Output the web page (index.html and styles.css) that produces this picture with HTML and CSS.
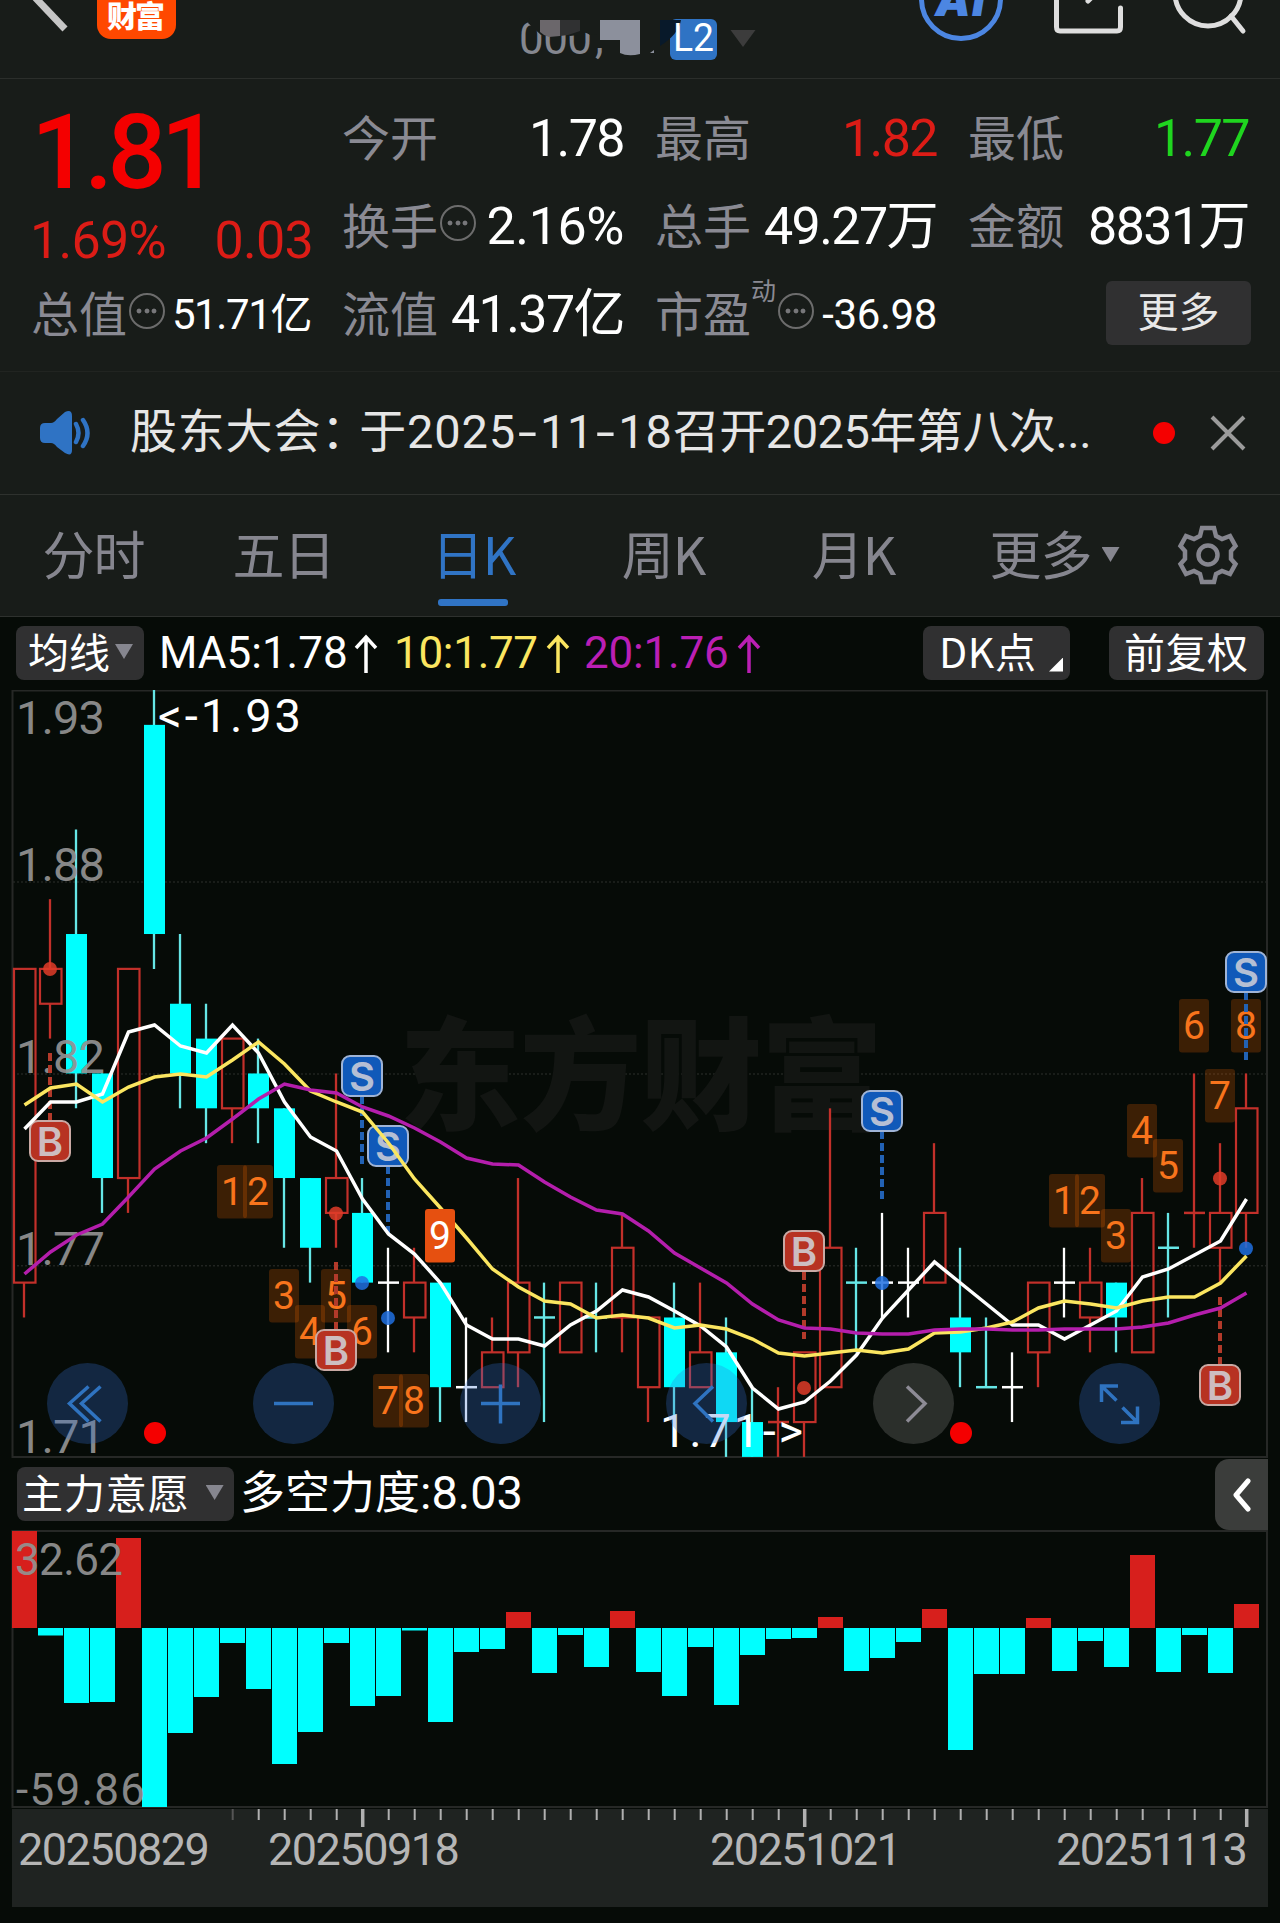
FILE: index.html
```html
<!DOCTYPE html>
<html lang="zh-CN">
<head>
<meta charset="utf-8">
<title>日K</title>
<link rel="stylesheet" href="styles.css">
</head>
<body>
<div class="app">
  <header class="topbar">
    <svg class="topbar-art" viewBox="0 0 1280 78" width="1280" height="78">
      <path d="M28-10 65 29" stroke="#c6c6c6" stroke-width="7" fill="none"/>
      <rect x="97" y="-40" width="79" height="79" rx="14" fill="#ff4800"/>
      <text x="107" y="27" class="logo-text" textLength="58">财富</text>
      <text x="519" y="53.500" class="code-text" textLength="73">000</text>
      <text x="595" y="53" class="code-text">,</text>
      <path d="M530 18H597V34L590 35Q584 30 578 35L570 36Q560 30 550 36L541 35 528 23Z" fill="#181c19"/>
      <path d="M540 20H560V36L549 37Q543 35 540 32Z" fill="#6b676b"/>
      <path d="M560 20H580V31L568 35 560 36Z" fill="#303132"/>
      <path d="M600 20H640V54Q628 57 620 53V40H600Z" fill="#8c909c"/>
      <path d="M650 53 654 50V53Z" fill="#8c909c"/>
      <rect x="670" y="19" width="47" height="41" rx="6" fill="#2f73c4"/>
      <path d="M660 20H681Q679 34 660 46Z" fill="#08192a"/>
      <text x="673" y="51" class="level-text" textLength="41" lengthAdjust="spacingAndGlyphs">L2</text>
      <path d="M730.500 30H755.500L743 47Z" fill="#3c3c3c"/>
      <circle cx="961" cy="-1" r="39.500" fill="none" stroke="#4c86e2" stroke-width="5"/>
      <text x="935" y="16" class="ai-text" textLength="50">AI</text>
      <path d="M1056.500-5V27Q1056.500 31 1060 31H1117Q1120.500 31 1120.500 27V8" fill="none" stroke="#dedede" stroke-width="5" stroke-linecap="round"/>
      <path d="M1093-4 1088 1" stroke="#dedede" stroke-width="5" stroke-linecap="round"/>
      <circle cx="1208" cy="-7" r="33" fill="none" stroke="#dedede" stroke-width="5"/>
      <path d="M1231 16 1243 31" stroke="#dedede" stroke-width="5" stroke-linecap="round"/>
    </svg>
  </header>

  <section class="quote">
    <div class="price-box">
      <div class="price">1.81</div>
      <div class="change"><span>1.69%</span><span>0.03</span></div>
    </div>
    <div class="cell"><span class="label">今开</span><span class="value">1.78</span></div>
    <div class="cell"><span class="label">最高</span><span class="value up">1.82</span></div>
    <div class="cell"><span class="label">最低</span><span class="value down">1.77</span></div>
    <div class="cell"><span class="label">换手</span><i class="info"></i><span class="value loose">2.16%</span></div>
    <div class="cell"><span class="label">总手</span><span class="value">49.27万</span></div>
    <div class="cell"><span class="label">金额</span><span class="value">8831万</span></div>
    <div class="cell"><span class="label">总值</span><i class="info"></i><span class="value small">51.71亿</span></div>
    <div class="cell"><span class="label">流值</span><span class="value">41.37亿</span></div>
    <div class="cell"><span class="label">市盈</span><span class="sup">动</span><i class="info"></i><span class="value small loose">-36.98</span></div>
    <div class="cell more-cell"><span class="more-btn">更多</span></div>
  </section>

  <section class="news">
    <svg class="speaker" viewBox="0 0 54 46" width="54" height="46">
      <path d="M6 13H12Q15 13 18 9L26 2Q33-1 33 6V40Q33 47 26 43L18 37Q15 33 12 33H6Q1 33 1 28V18Q1 13 6 13Z" fill="#2f73c4"/>
      <path d="M37 14Q42 23 37 32M44 10Q53 23 44 36" fill="none" stroke="#2f73c4" stroke-width="4.500" stroke-linecap="round"/>
    </svg>
    <span class="news-text">股东大会<span class="colon">：</span>于2025<span class="dash">-</span>11<span class="dash">-</span>18<span class="rest">召开2025年第八次...</span></span>
    <i class="dot"></i>
    <svg class="close" viewBox="0 0 36 36" width="36" height="36"><path d="M2 2 34 34M34 2 2 34" stroke="#9b9b9b" stroke-width="4"/></svg>
  </section>

  <nav class="tabs">
    <span class="tab">分时</span>
    <span class="tab">五日</span>
    <span class="tab active">日K</span>
    <span class="tab">周K</span>
    <span class="tab">月K</span>
    <span class="tab">更多<i class="caret"></i></span>
    <svg class="gear" viewBox="-32 -32 64 64" width="64" height="64">
      <path d="M-6-27H6L8-19 14-16 22-19 27.500-9 23-4V4L27.500 9 22 19 14 16 8 19 6 27H-6L-8 19-14 16-22 19-27.500 9-23 4V-4L-27.500-9-22-19-14-16-8-19Z" fill="none" stroke="#86868f" stroke-width="4.500"/>
      <circle r="9.500" fill="none" stroke="#86868f" stroke-width="4.500"/>
    </svg>
  </nav>

  <section class="ma-bar">
    <span class="chip chip-ma">均线<i class="caret"></i></span>
    <span class="ma ma5">MA5:1.78</span><svg class="arrow ma5" viewBox="0 0 24 40" width="24" height="40"><path d="M12 39V3M2 14 12 3 22 14"/></svg>
    <span class="ma ma10">10:1.77</span><svg class="arrow ma10" viewBox="0 0 24 40" width="24" height="40"><path d="M12 39V3M2 14 12 3 22 14"/></svg>
    <span class="ma ma20">20:1.76</span><svg class="arrow ma20" viewBox="0 0 24 40" width="24" height="40"><path d="M12 39V3M2 14 12 3 22 14"/></svg>
    <span class="chip chip-dk">DK点<i class="corner"></i></span>
    <span class="chip chip-adj">前复权</span>
  </section>

  <svg id="kline" class="chart" viewBox="0 690 1280 769" width="1280" height="769"></svg>

  <section class="sub-bar">
    <span class="chip chip-main">主力意愿<i class="caret"></i></span>
    <span class="sub-value">多空力度<span class="num">:8.03</span></span>
    <span class="fold"><svg viewBox="0 0 20 34" width="20" height="34"><path d="M16 3 4 17 16 31" fill="none" stroke="#fff" stroke-width="5" stroke-linecap="round" stroke-linejoin="round"/></svg></span>
  </section>

  <svg id="force" class="chart" viewBox="0 1530 1280 279" width="1280" height="279"></svg>
  <svg id="axis" class="chart" viewBox="0 1809 1280 114" width="1280" height="114"></svg>
</div>
<script src="chart.js"></script>
</body>
</html>
```
FILE: styles.css
```css
* { box-sizing: border-box; }

body {
  margin: 0;
  background: #060b07;
  color: #fff;
  font-family: "Noto Sans CJK SC", sans-serif;
}

.app { width: 1280px; height: 1923px; overflow: hidden; display: flex; flex-direction: column; }
.app > * { flex: none; }
i { display: inline-block; font-style: normal; }
svg { display: block; }
svg text { white-space: pre; }

/* figures use Roboto, with the CJK face for unit characters */
.price, .change, .value, .news-text, .ma, .num,
.code-text, .level-text, .scale, .scale-sm, .extreme, .date, .count {
  font-family: Roboto, "Noto Sans CJK SC", sans-serif;
}

/* top bar */
.topbar { height: 79px; background: #181c19; border-bottom: 1px solid #2b2e2b; }
.logo-text { font-size: 30px; font-weight: 900; fill: #fff; }
.code-text { font-size: 44px; font-weight: 400; fill: #85878f; }
.level-text { font-size: 38px; fill: #fff; }
.ai-text { font: italic 900 45px Inter, sans-serif; fill: #4c86e2; }

/* quote grid */
.quote {
  height: 292px;
  padding: 12px 0 0 30px;
  background: #181c19;
  display: grid;
  grid-template-columns: 283px 285px 285px 284px;
  grid-template-rows: repeat(3, 88px);
  column-gap: 28px;
}
.price-box { grid-row: 1 / 3; color: #f40000; }
.price { margin: 12px 0 0 1px; font-size: 104px; line-height: 100px; font-weight: 500; letter-spacing: -5.8px; }
.change { margin-top: 8px; display: flex; justify-content: space-between; font-size: 52px; line-height: 60px; letter-spacing: -.7px; color: #dc1c16; }
.cell { display: flex; align-items: center; line-height: 60px; }
.label { font-size: 48px; margin-left: 1px; color: #8a8a93; }
.value { margin-left: auto; padding: 7px 2px 0 0; font-size: 52px; letter-spacing: -1.6px; white-space: nowrap; }
.small { font-size: 42px; letter-spacing: -1.4px; }
.loose { letter-spacing: -.4px; }
.up { color: #dc1c16; }
.down { color: #1fd51f; }
.sup { margin: -44px 0 0 0; font-size: 25px; line-height: 30px; color: #8a8a93; }
.info {
  width: 36px; height: 36px; margin-left: 2px;
  border: 2.5px solid #6c6c6c; border-radius: 50%;
  background:
    radial-gradient(circle at 8px 50%, #77777a 2px, transparent 2.8px),
    radial-gradient(circle at 50% 50%, #77777a 2px, transparent 2.8px),
    radial-gradient(circle at 23px 50%, #77777a 2px, transparent 2.8px);
}
.more-btn {
  width: 145px; height: 64px; margin: 3px 0 0 auto;
  border-radius: 6px; background: #303031; color: #e8e8e8;
  font-size: 41px; line-height: 57px; text-align: center;
}

/* announcement */
.news {
  height: 124px;
  padding: 0 34px 0 39px;
  display: flex; align-items: center;
  background: #181c19;
  border-top: 1px solid #212421; border-bottom: 1px solid #2e312e;
}
.news-text { margin: -3px 0 0 37px; font-size: 47px; line-height: 60px; letter-spacing: .8px; color: #e6e6e6; white-space: nowrap; }
.colon { letter-spacing: -9px; }
.dash { display: inline-block; width: 24px; text-align: center; transform: scaleX(1.45); }
.rest { letter-spacing: -.5px; }
.dot { width: 22px; height: 22px; margin-left: auto; border-radius: 50%; background: #f50000; }
.close { margin-left: 35px; }

/* period tabs */
.tabs {
  height: 122px;
  display: grid; grid-template-columns: repeat(5, 190px) 212px 92px;
  background: #181c19;
  border-bottom: 1px solid #2e312e;
}
.tab { position: relative; height: 115px; padding: 1px 3px 0 0; display: flex; align-items: center; justify-content: center; font-size: 52px; line-height: 60px; letter-spacing: -1px; color: #86868f; }
.active { color: #3074c5; }
.active::after { content: ""; position: absolute; left: 58px; bottom: 4px; width: 70px; height: 7px; border-radius: 3px; background: #3074c5; }
.caret { width: 18px; height: 15px; background: #86868f; clip-path: polygon(0 0, 100% 0, 50% 100%); }
.tab .caret { margin: 3px 0 0 10px; }
.gear { margin: 28px 0 0 14px; }

/* moving averages */
.ma-bar { height: 73px; padding: 0 16px; display: flex; align-items: center; }
.chip { position: relative; height: 54px; display: flex; align-items: center; flex: none; margin-top: -2px; border-radius: 8px; background: #303031; font-size: 41px; line-height: 50px; padding-bottom: 6px; }
.chip-ma { width: 128px; padding-left: 12px; }
.chip-ma .caret { margin: 4px 0 0 5px; }
.ma { font-size: 44px; line-height: 50px; margin-top: -1px; }
.arrow { fill: none; stroke: currentColor; stroke-width: 3.5; }
.ma5 { color: #fff; }
.ma10 { color: #fbe660; }
.ma20 { color: #bb1fb4; }
.ma.ma5 { width: 195px; margin-left: 15px; letter-spacing: 0; }
.ma.ma10 { width: 152px; margin-left: 16px; letter-spacing: -.3px; }
.ma.ma20 { width: 153px; margin-left: 14px; letter-spacing: -.2px; }
.chip-dk { width: 147px; margin-left: auto; padding-left: 16px; letter-spacing: .6px; }
.corner { position: absolute; right: 7px; bottom: 8px; width: 14px; height: 14px; background: #fff; clip-path: polygon(100% 0, 100% 100%, 0 100%); }
.chip-adj { width: 155px; margin-left: 39px; padding-left: 15px; letter-spacing: .5px; }

/* lower indicator bar */
.sub-bar { height: 71px; padding: 0 12px 0 17px; display: flex; align-items: center; }
.chip-main { width: 217px; padding-left: 5px; letter-spacing: .9px; }
.chip-main .caret { margin: 4px 0 0 16px; }
.sub-value { margin: -6px 0 0 6px; font-size: 45px; line-height: 50px; white-space: nowrap; }
.num { font-size: 47px; letter-spacing: 0; }
.fold { width: 53px; height: 71px; margin-left: auto; display: flex; align-items: center; justify-content: center; border-radius: 14px 0 0 14px; background: #3b3d3b; }

/* chart text */
.scale { font-size: 47px; fill: #929292; opacity: .92; }
.scale-sm { font-size: 44px; fill: #929292; opacity: .92; }
.extreme { font-size: 47px; fill: #fff; }
.date { font-size: 45px; letter-spacing: -1.5px; fill: #b5b5b5; }
.watermark { font-size: 122px; font-weight: 900; fill: #121512; }
.count { font-size: 39px; text-anchor: middle; fill: #f8741c; }
.count-hot { fill: #fff; }
.flag { font: 600 40px Inter, sans-serif; text-anchor: middle; }
```
FILE: chart.js
```js
const X0 = 24, STEP = 26, TOP = 690, TICK = 34.86;
const cx = i => X0 + STEP * i;
const cy = level => TOP + TICK * level;
const RED = '#c2302a', CYAN = '#00ffff', WICK = '#66e6e6', WHITE = '#ffffff';

// Each row: kind, high, body top, body bottom, low. Levels count 0.01 steps below 1.93.
const candles = [
  ['r',8,8,17,18],['r',6,8,9,10],['c',4,7,11,12],['c',11,11,14,15],['r',8,8,14,15],
  ['c',0,1,7,8],['c',7,9,11,12],['c',9,10,12,13],['r',10,10,12,13],['c',10,11,12,13],
  ['c',12,12,14,16],['c',14,14,16,17],['r',11,14,15,16],['c',14,15,17,17],['w',16,17,17,19],
  ['r',16,17,18,19],['c',17,17,20,21],['w',18,20,20,21],['r',18,19,20,20],['r',14,17,19,20],
  ['c',17,18,18,21],['r',17,17,19,19],['c',17,18,18,19],['r',15,16,18,19],['r',18,18,20,21],
  ['c',17,18,20,21],['r',17,19,20,20],['c',18,19,21,22],['c',20,21,22,22],['r',20,21,21,22],
  ['r',19,19,21,22],['r',12,16,20,20],['c',16,17,17,19],['w',15,17,17,18],['w',16,17,17,18],
  ['r',13,15,17,17],['c',16,18,19,20],['c',18,20,20,20],['w',19,20,20,21],['r',17,17,19,20],
  ['w',16,17,17,18],['r',16,17,18,19],['c',17,17,18,19],['r',14,15,19,19],['c',15,16,16,18],
  ['r',11,15,15,16],['r',13,15,16,17],['r',11,12,15,16]
];
const ma5 = [1129,1102,1102,1094,1032,1025,1046,1053,1025,1053,1102,1137,1151,1199,1234,1254,1283,1325,1339,1339,1346,1325,1311,1290,1297,1311,1326,1347,1388,1409,1402,1381,1355,1318,1290,1262,1283,1304,1325,1325,1339,1325,1311,1277,1269,1255,1241,1199];
const ma10 = [1105,1088,1084,1102,1087,1077,1074,1077,1060,1042,1064,1091,1102,1112,1143,1179,1208,1238,1269,1287,1301,1304,1318,1315,1318,1328,1325,1329,1339,1353,1356,1353,1350,1353,1349,1333,1332,1328,1322,1308,1301,1304,1308,1301,1297,1297,1283,1256];
const ma20 = [1274,1252,1235,1224,1197,1169,1151,1138,1119,1099,1084,1090,1093,1107,1116,1128,1142,1158,1164,1165,1182,1197,1210,1214,1231,1253,1268,1283,1304,1320,1328,1329,1333,1334,1334,1330,1329,1329,1330,1330,1329,1329,1329,1327,1323,1315,1308,1293];

let k = '';
[882, 1074, 1265.7].forEach(y => { k += `<path d="M13 ${y}H1267" stroke="#212421" stroke-width="1.500" stroke-dasharray="2 2"/>`; });
k += '<text class="watermark" x="399" y="1120" textLength="484">东方财富</text>';
k += '<path d="M12.500 1457V690.500H1267V1457Z" fill="none" stroke="#262826" stroke-width="2"/>';

candles.forEach(([t, h, a, b, l], i) => {
  const x = cx(i), col = t === 'r' ? RED : t === 'c' ? WICK : WHITE;
  const line = (from, to) => from < to ? `<path d="M${x} ${cy(from)}V${cy(to)}" stroke="${col}" stroke-width="2.300"/>` : '';
  if (a === b) {
    k += line(h, l) + `<path d="M${x - 10} ${cy(a)}H${x + 11}" stroke="${col}" stroke-width="2.500"/>`;
  } else if (t === 'r') {
    k += line(h, a) + line(b, l) + `<rect x="${x - 10}" y="${cy(a)}" width="21.500" height="${cy(b) - cy(a)}" fill="none" stroke="${RED}" stroke-width="2.200"/>`;
  } else {
    k += line(h, l) + `<rect x="${x - 10}" y="${cy(a)}" width="21" height="${cy(b) - cy(a)}" fill="${CYAN}"/>`;
  }
});

// Axis labels lie over the candles and below the average lines.
[['1.93', 733.5], ['1.88', 881], ['1.82', 1073], ['1.77', 1265], ['1.71', 1453]].forEach(([s, y]) => {
  k += `<text class="scale" x="16" y="${y}" textLength="89">${s}</text>`;
});

const counts = [
  [8,1165,1],[9,1165,2],[10,1269,3],[12,1269,5],[11,1305,4],[13,1305,6],[14,1374,7],[15,1374,8],
  [40,1174,1],[41,1174,2],[42,1209,3],[43,1104,4],[44,1139,5],[45,999,6],[46,1069,7],[47,999,8]
];
counts.forEach(([i, y, n]) => {
  k += `<rect x="${cx(i) - 15}" y="${y}" width="30" height="53.500" rx="3" fill="#ff6a00" fill-opacity=".22"/><text class="count" x="${cx(i)}" y="${y + 40}">${n}</text>`;
});

const flags = [
  ['B',1,1141,1053,1120,969],['B',12,1350,1262,1329,1213.5],['B',30,1251,1272,1339,1388],['B',46,1385,1297,1364,1178.5],
  ['S',13,1076,1096,1164,1283],['S',14,1146,1166,1234,1318],['S',33,1111,1131,1199,1283],['S',47,972,992,1060,1248.5]
];
flags.forEach(([s, i, y, d0, d1, dot]) => {
  const buy = s === 'B', x = cx(i);
  k += `<path d="M${x} ${d0}V${d1}" stroke="${buy ? '#b23a2a' : '#2262b4'}" stroke-width="4" stroke-dasharray="8 4"/>`;
  k += `<rect x="${x - 20}" y="${y - 20}" width="40" height="40" rx="8" fill="${buy ? '#b73222' : '#1059b9'}" stroke="${buy ? '#c9a9a4' : '#9fb4d6'}" stroke-width="2"/>`;
  k += `<text class="flag" x="${x}" y="${y + 14.5}" fill="${buy ? '#cdbdc0' : '#b5bfd4'}">${s}</text>`;
  k += `<circle cx="${x}" cy="${dot}" r="7" fill="${buy ? '#e03c28' : '#2070e0'}" fill-opacity=".85"/>`;
});

const line = (ys, col) => { k += `<polyline points="${ys.map((y, i) => cx(i) + 0.5 + ',' + y).join(' ')}" fill="none" stroke="${col}" stroke-width="3.500"/>`; };
line(ma5, '#ffffff');
line(ma10, '#fbe660');
line(ma20, '#b41eac');

k += `<rect x="${cx(16) - 15}" y="1209" width="30" height="53.500" rx="3" fill="#e65010"/><text class="count count-hot" x="${cx(16)}" y="1249">9</text>`;
k += '<text class="extreme" x="158" y="731.500" textLength="143">&lt;-1.93</text>';
k += '<text class="extreme" x="660" y="1447" textLength="143">1.71-&gt;</text>';
k += '<circle cx="155" cy="1433" r="11" fill="#f50000"/><circle cx="961" cy="1433" r="11" fill="#f50000"/>';

const buttons = [
  [87.5, 'M1-17-18 0 1 18M13-17-6 0 13 18'],
  [293.5, 'M-19.500 0H19.500'],
  [500.5, 'M-19.500 0H19.500M0-19V20'],
  [706.5, 'M6.500-17-11.500 0 6.500 18'],
  [913.5, 'M-6.500-17 11.500 0-6.500 18'],
  [1119.5, 'M-1.500-17.500H-18V-1.500M-18-17.500-3-3M3 4 18 19M18 3V19H1.500']
];
buttons.forEach(([x, d]) => {
  const off = x === 913.5;
  k += `<g transform="translate(${x} 1403.500)"><circle r="40.500" fill="${off ? '#fff' : '#3773d7'}" fill-opacity="${off ? .15 : .28}"/><path d="${d}" fill="none" stroke="${off ? '#8d8b95' : '#2f73c0'}" stroke-width="3.500"/></g>`;
});
document.getElementById('kline').innerHTML = k;

// Force bars: height in px, positive is above the zero line.
const force = [97,-7.5,-75,-74,90,-179,-105,-69,-15,-61,-136,-104,-15,-78,-68,-2.5,-94,-24,-21,16,-45,-7,-39,17,-44,-68,-19,-77,-27,-11,-10,11,-43,-30,-14,19,-122,-46,-46,10,-43,-13,-39,73,-44,-7,-45,24];
let f = '<path d="M12.500 1807V1531H1267V1807Z" fill="none" stroke="#262826" stroke-width="2"/>';
force.forEach((v, i) => {
  f += `<rect x="${12 + STEP * i}" y="${v > 0 ? 1628 - v : 1628}" width="25" height="${Math.abs(v)}" fill="${v > 0 ? '#d71f1c' : CYAN}"/>`;
});
f += '<text class="scale-sm" x="15" y="1575" textLength="108">32.62</text><text class="scale-sm" x="16" y="1805" textLength="129">-59.86</text>';
document.getElementById('force').innerHTML = f;

let a = '<rect x="12" y="1809" width="1256" height="98" fill="#1f2321"/>';
for (let i = 8; i < 48; i++) {
  const major = i === 13 || i === 30 || i === 47;
  a += `<path d="M${cx(i) + 0.7} 1809V${major ? 1827 : 1820}" stroke="${i === 8 ? '#555' : '#b0b0b0'}" stroke-width="${major ? 3.5 : 2}"/>`;
}
[['20250829', 18], ['20250918', 268], ['20251021', 710], ['20251113', 1056]].forEach(([s, x]) => {
  a += `<text class="date" x="${x}" y="1865">${s}</text>`;
});
document.getElementById('axis').innerHTML = a;
```
